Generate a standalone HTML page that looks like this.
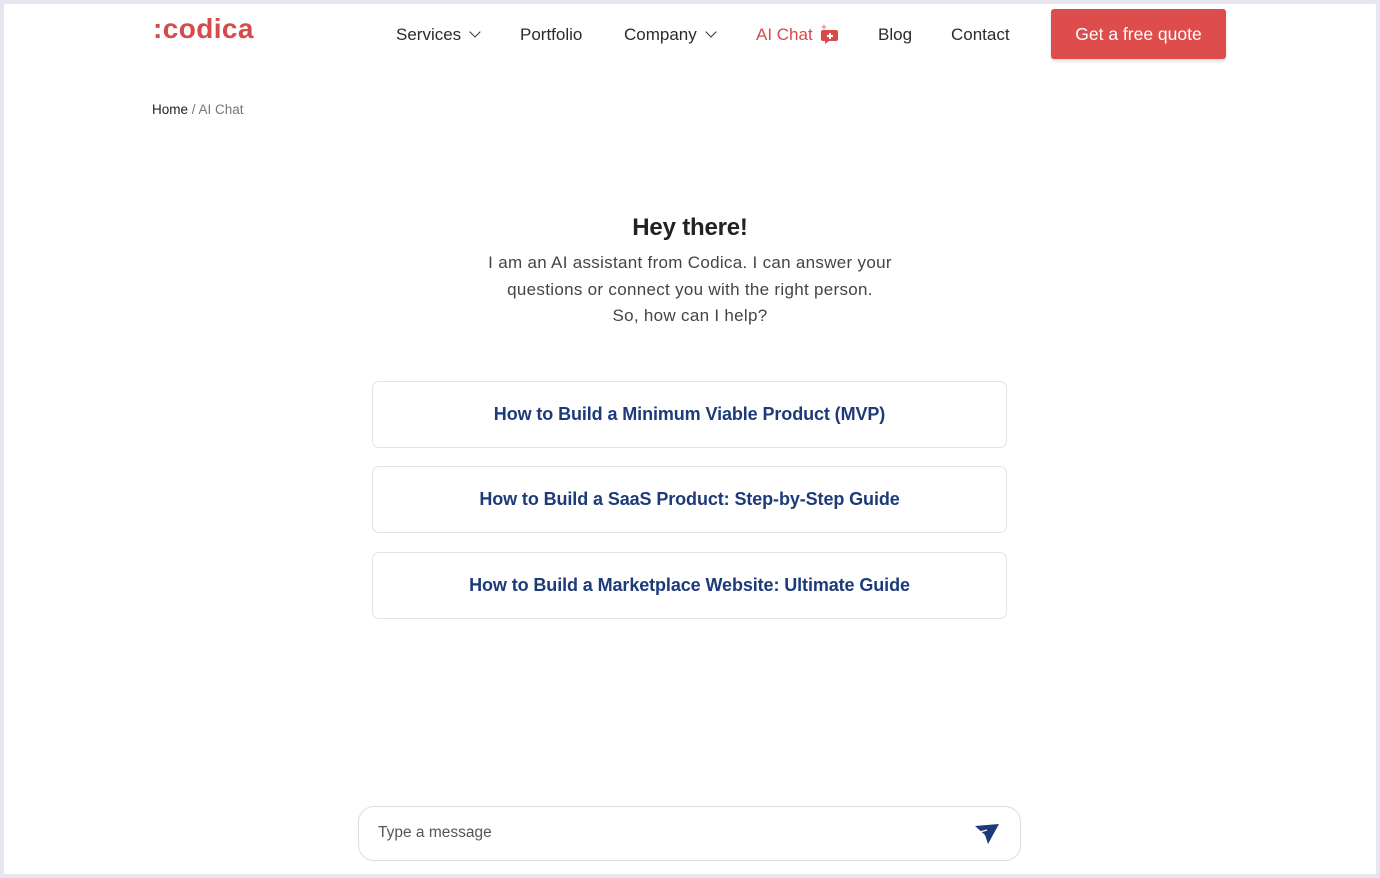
<!DOCTYPE html>
<html><head><meta charset="utf-8"><style>
*{box-sizing:border-box;margin:0;padding:0}
html,body{width:1380px;height:878px;overflow:hidden;background:#e6e6f0;font-family:"Liberation Sans",sans-serif}
.frame{position:absolute;left:4px;top:4px;width:1372px;height:870px;background:#fff;border-radius:2px}
.logo{position:absolute;left:153px;top:13px;font-size:28px;font-weight:bold;color:#d54a4a;letter-spacing:0.4px}
.nav{position:absolute;top:25px;font-size:17px;color:#2b2b2b;white-space:nowrap}
.chev{display:inline-block;width:8px;height:8px;border-right:1.5px solid #333;border-bottom:1.5px solid #333;transform:rotate(45deg);margin-left:10px;position:relative;top:-4px}
.btn{position:absolute;left:1051px;top:9px;width:175px;height:50px;background:#de4c4b;color:#fff;font-size:17.5px;border-radius:3px;text-align:center;line-height:50px;box-shadow:0 2px 3px rgba(0,0,0,.15)}
.crumb{position:absolute;left:152px;top:102px;font-size:13.5px;color:#222}
.crumb span{color:#777}
h1{position:absolute;left:0;width:1380px;top:214px;text-align:center;font-size:24px;color:#222;letter-spacing:-0.2px}
.intro{position:absolute;left:0;width:1380px;top:250px;text-align:center;font-size:17px;line-height:26.5px;color:#444;letter-spacing:0.3px}
.card{position:absolute;left:372px;width:635px;height:67px;border:1px solid #e2e2e8;border-radius:7px;text-align:center;line-height:65px;font-size:18px;font-weight:bold;color:#1d3a7a;letter-spacing:-0.1px}
.input{position:absolute;left:358px;top:806px;width:663px;height:55px;border:1px solid #dcdce2;border-radius:16px}
.input span{position:absolute;left:19px;top:17px;font-size:15.5px;color:#555}
</style></head><body>
<div class="frame"></div>
<div class="logo">:codica</div>
<div class="nav" style="left:396px">Services<i class="chev"></i></div>
<div class="nav" style="left:520px">Portfolio</div>
<div class="nav" style="left:624px">Company<i class="chev"></i></div>
<div class="nav" style="left:756px;color:#d54a4a">AI Chat</div>
<svg width="22" height="22" viewBox="0 0 22 22" style="position:absolute;left:819px;top:23px"><path d="M4 7h13a2 2 0 0 1 2 2v7a2 2 0 0 1-2 2H10l-4 3v-3H4a2 2 0 0 1-2-2V9a2 2 0 0 1 2-2z" fill="#d54a4a"/><path d="M11 10v6M8 13h6" stroke="#fff" stroke-width="2"/><path d="M5 1l1 2 2 1-2 1-1 2-1-2-2-1 2-1z" fill="#e8a0a0"/></svg>
<div class="nav" style="left:878px">Blog</div>
<div class="nav" style="left:951px">Contact</div>
<div class="btn">Get a free quote</div>
<div class="crumb">Home <span>/ AI Chat</span></div>
<h1>Hey there!</h1>
<div class="intro">I am an AI assistant from Codica. I can answer your<br>questions or connect you with the right person.<br>So, how can I help?</div>
<div class="card" style="top:381px">How to Build a Minimum Viable Product (MVP)</div>
<div class="card" style="top:466px">How to Build a SaaS Product: Step-by-Step Guide</div>
<div class="card" style="top:552px">How to Build a Marketplace Website: Ultimate Guide</div>
<div class="input"><span>Type a message</span>
<svg width="26" height="22" viewBox="0 0 26 22" style="position:absolute;left:615px;top:16px"><path d="M1 3L25 1 14 21 11 12z" fill="#1d3a7a"/><path d="M6 9l7-2" stroke="#fff" stroke-width="1.2"/></svg></div>
</body></html>
